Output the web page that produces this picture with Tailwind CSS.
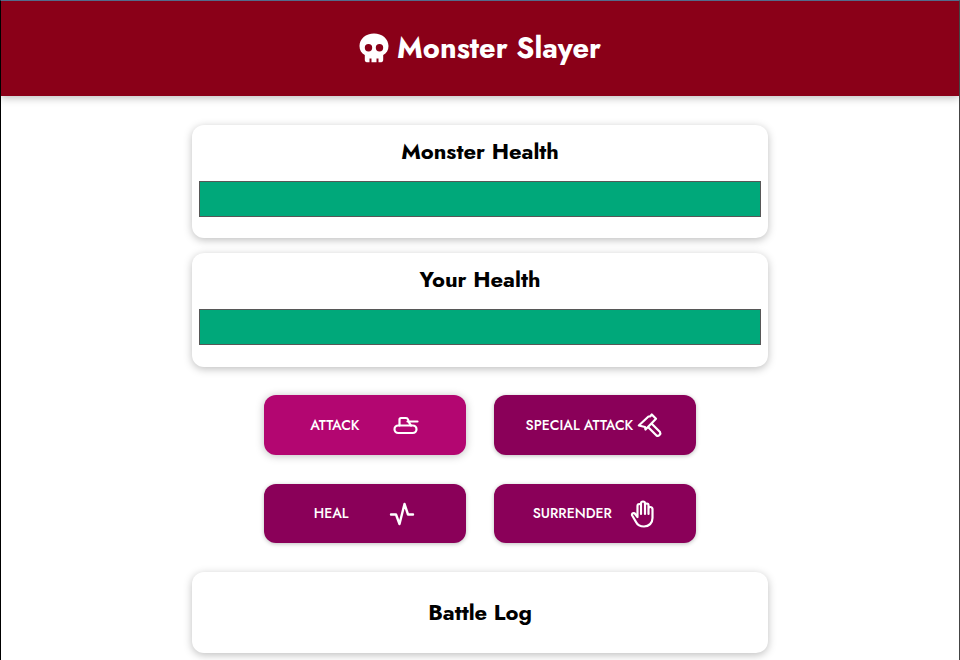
<!DOCTYPE html>
<html lang="en">
<head>
<meta charset="utf-8">
<meta name="viewport" content="width=device-width, initial-scale=1">
<title>Monster Slayer</title>
<script src="https://cdn.jsdelivr.net/npm/@tailwindcss/browser@4"></script>
</head>
<body class="min-h-screen border-x border-t border-l-black border-r-[#444] border-t-[#536b8b] bg-white font-['Jost','Lato',sans-serif] text-black">
  <header class="flex h-[95px] items-center justify-center gap-2 bg-[#8a0018] pb-0.5 text-white shadow-[0_2px_8px_rgba(0,0,0,0.26)]">
    <svg class="size-[30px]" viewBox="0 0 30 30" aria-hidden="true">
      <path fill="currentColor" fill-rule="evenodd" d="M15 .500C6.800 .500 .500 5.800 .500 13c0 4.300 2 7.300 5.300 9v4.800c0 1.500.700 2.400 2 2.400h2.700v-3.700h2v3.700h5v-3.700h2v3.700h2.700c1.300 0 2-.900 2-2.400V22c3.300-1.700 5.300-4.700 5.300-9C29.500 5.800 23.200 .500 15 .500ZM9.500 11a3.700 3.700 0 1 1 0 7.400 3.700 3.700 0 0 1 0-7.400Zm11 0a3.700 3.700 0 1 1 0 7.400 3.700 3.700 0 0 1 0-7.400Z"/>
    </svg>
    <h1 class="text-[29px] leading-10 font-bold">Monster Slayer</h1>
  </header>

  <main class="mx-auto mt-[29px] w-full max-w-[576px]">
    <section class="rounded-xl px-[7px] pt-2.5 pb-[21px] text-center shadow-[0_2px_8px_rgba(0,0,0,0.26)]">
      <h2 class="mb-3.5 text-[22px] leading-8 font-bold">Monster Health</h2>
      <div class="h-9 border border-[#575757] bg-white" role="progressbar" aria-label="Monster Health" aria-valuenow="100">
        <div class="h-full bg-[#00a87a]" style="width:100%"></div>
      </div>
    </section>

    <section class="mt-[15px] rounded-xl px-[7px] pt-2.5 pb-[22px] text-center shadow-[0_2px_8px_rgba(0,0,0,0.26)]">
      <h2 class="mb-3.5 text-[22px] leading-8 font-bold">Your Health</h2>
      <div class="h-9 border border-[#575757] bg-white" role="progressbar" aria-label="Your Health" aria-valuenow="100">
        <div class="h-full bg-[#00a87a]" style="width:100%"></div>
      </div>
    </section>

    <section class="mx-auto mt-7 mb-[29px] grid w-3/4 grid-cols-2 gap-x-7 gap-y-[29px]" aria-label="Controls">
      <button type="button" class="flex h-[60px] items-center justify-around rounded-xl bg-[#b30671] px-[30px] text-[14px] font-medium whitespace-nowrap text-white shadow-[0_1px_8px_rgba(0,0,0,0.26)]">
        ATTACK
        <svg class="size-7 shrink-0" viewBox="0 0 28 28" fill="none" stroke="currentColor" stroke-width="2.200" stroke-linecap="round" stroke-linejoin="round" aria-hidden="true">
          <rect x="2.500" y="14.500" width="22" height="7.500" rx="3.750"/>
          <path d="M7.500 14.500V8.500q0-1.500 1.500-1.500h5q1.500 0 2 1.500l1 3 2 3M15.500 10.500H25.500"/>
        </svg>
      </button>
      <button type="button" class="flex h-[60px] items-center justify-around rounded-xl bg-[#8a0059] px-[30px] text-[14px] font-medium whitespace-nowrap text-white shadow-[0_1px_4px_rgba(0,0,0,0.26)]">
        SPECIAL ATTACK
        <svg class="size-7 shrink-0" viewBox="0 0 28 28" fill="none" stroke="currentColor" stroke-width="2.200" stroke-linecap="round" stroke-linejoin="round" aria-hidden="true">
          <path d="M15.800 3.500 20 7.800 9.500 18.500 9 16 2.800 14.500 12.500 5.500h1.500ZM12 16l8.500 8.500q1.500 1 3-.500t.500-3L15.500 12.500"/>
        </svg>
      </button>
      <button type="button" class="flex h-[59px] items-center justify-around rounded-xl bg-[#8a0059] px-[30px] text-[14px] font-medium whitespace-nowrap text-white shadow-[0_1px_4px_rgba(0,0,0,0.26)]">
        HEAL
        <svg class="size-7 shrink-0" viewBox="0 0 28 28" fill="none" stroke="currentColor" stroke-width="2.400" stroke-linecap="round" stroke-linejoin="round" aria-hidden="true">
          <path d="M3 14.500h5L11.500 24 16.500 4l3.500 10.500h5"/>
        </svg>
      </button>
      <button type="button" class="flex h-[59px] items-center justify-around rounded-xl bg-[#8a0059] px-[30px] text-[14px] font-medium whitespace-nowrap text-white shadow-[0_1px_4px_rgba(0,0,0,0.26)]">
        SURRENDER
        <svg class="size-7 shrink-0" viewBox="0 0 28 28" fill="none" stroke="currentColor" stroke-width="2.200" stroke-linecap="round" stroke-linejoin="round" aria-hidden="true">
          <path d="M8.500 16V6q0-2 1.800-2T12 6v8V3.500q0-2 2-2t2 2V14 5.500q0-2 1.800-2t1.700 2V14 9q0-2 1.800-2T23.500 9v9c0 5-3.500 8.500-8.500 8.500-4 0-6.500-1.500-8-4.500L3.200 15.500c-1-2 1.800-3.200 3-1.500l2.300 3"/>
        </svg>
      </button>
    </section>

    <section class="h-[81px] rounded-xl px-4 pt-6 text-center shadow-[0_2px_8px_rgba(0,0,0,0.26)]">
      <h2 class="text-[22px] leading-8 font-bold">Battle Log</h2>
    </section>
  </main>
</body>
</html>
